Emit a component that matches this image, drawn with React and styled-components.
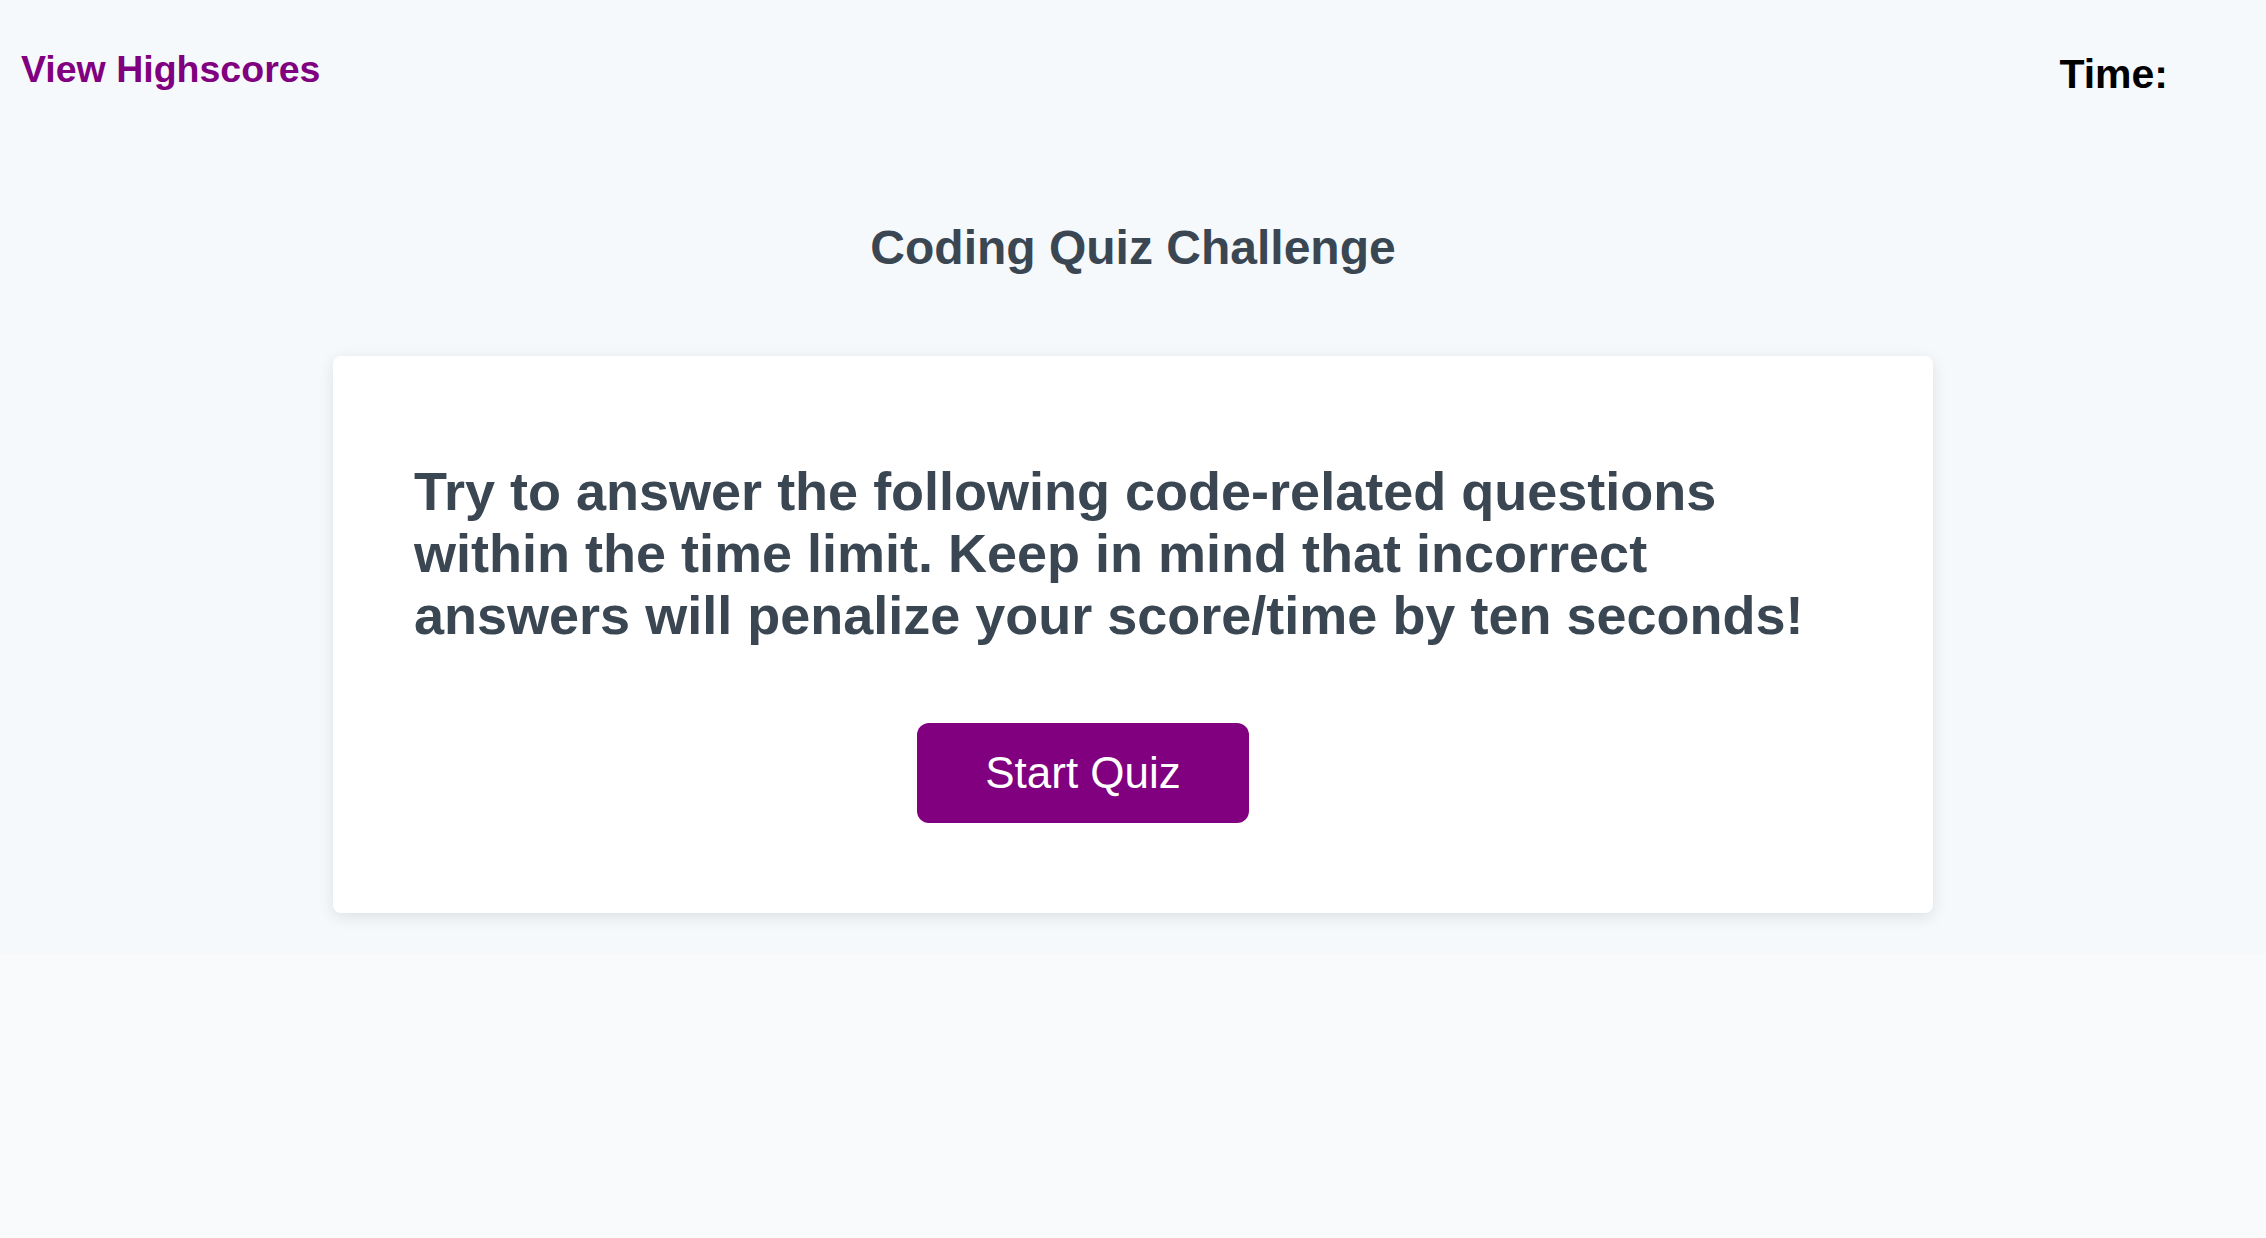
import styled, { createGlobalStyle } from "styled-components";

const GlobalStyle = createGlobalStyle`
  html, body {
    margin: 0;
    padding: 0;
    background: #f9fafb;
    font-family: "Liberation Sans", Arial, Helvetica, sans-serif;
  }
  body {
    min-height: 100vh;
  }
`;

const Wrapper = styled.div`
  background: #f5f9fc;
  padding-bottom: 41px;
`;

const Header = styled.header`
  display: flex;
  justify-content: space-between;
  align-items: flex-start;
  padding: 48px 98px 0 21px;
  height: 120px;
  box-sizing: border-box;
`;

const HighscoresLink = styled.a`
  color: #800080;
  font-weight: 700;
  font-size: 37.5px;
  text-decoration: none;
  cursor: pointer;
`;

const Timer = styled.div`
  color: #000;
  font-weight: 700;
  font-size: 41px;
  margin-top: 3px;
`;

const Title = styled.h1`
  margin: 100px 0 0;
  text-align: center;
  font-size: 48px;
  font-weight: 700;
  color: #3a4753;
  line-height: normal;
`;

const Card = styled.section`
  width: 1600px;
  margin: 81px 0 0 333px;
  box-sizing: border-box;
  background: #fff;
  border-radius: 8px;
  box-shadow: 0 4px 16px rgba(0, 0, 0, 0.1);
  padding: 104px 82px 90px 81px;
  display: flex;
  flex-direction: column;
  align-items: flex-start;
`;

const Intro = styled.p`
  margin: 0;
  font-size: 54px;
  font-weight: 700;
  color: #3a4753;
  line-height: 62px;
`;

const StartButton = styled.button`
  margin: 77px 0 0 503px;
  width: 332px;
  height: 100px;
  border: none;
  border-radius: 12px;
  background: #800080;
  color: #fff;
  font-family: inherit;
  font-size: 44px;
  cursor: pointer;
`;

export default function App() {
  return (
    <>
      <GlobalStyle />
      <Wrapper>
        <Header>
          <HighscoresLink>View Highscores</HighscoresLink>
          <Timer>Time:</Timer>
        </Header>
        <Title>Coding Quiz Challenge</Title>
        <Card>
          <Intro>
            Try to answer the following code-related questions within the time
            limit. Keep in mind that incorrect answers will penalize your
            score/time by ten seconds!
          </Intro>
          <StartButton>Start Quiz</StartButton>
        </Card>
      </Wrapper>
    </>
  );
}
